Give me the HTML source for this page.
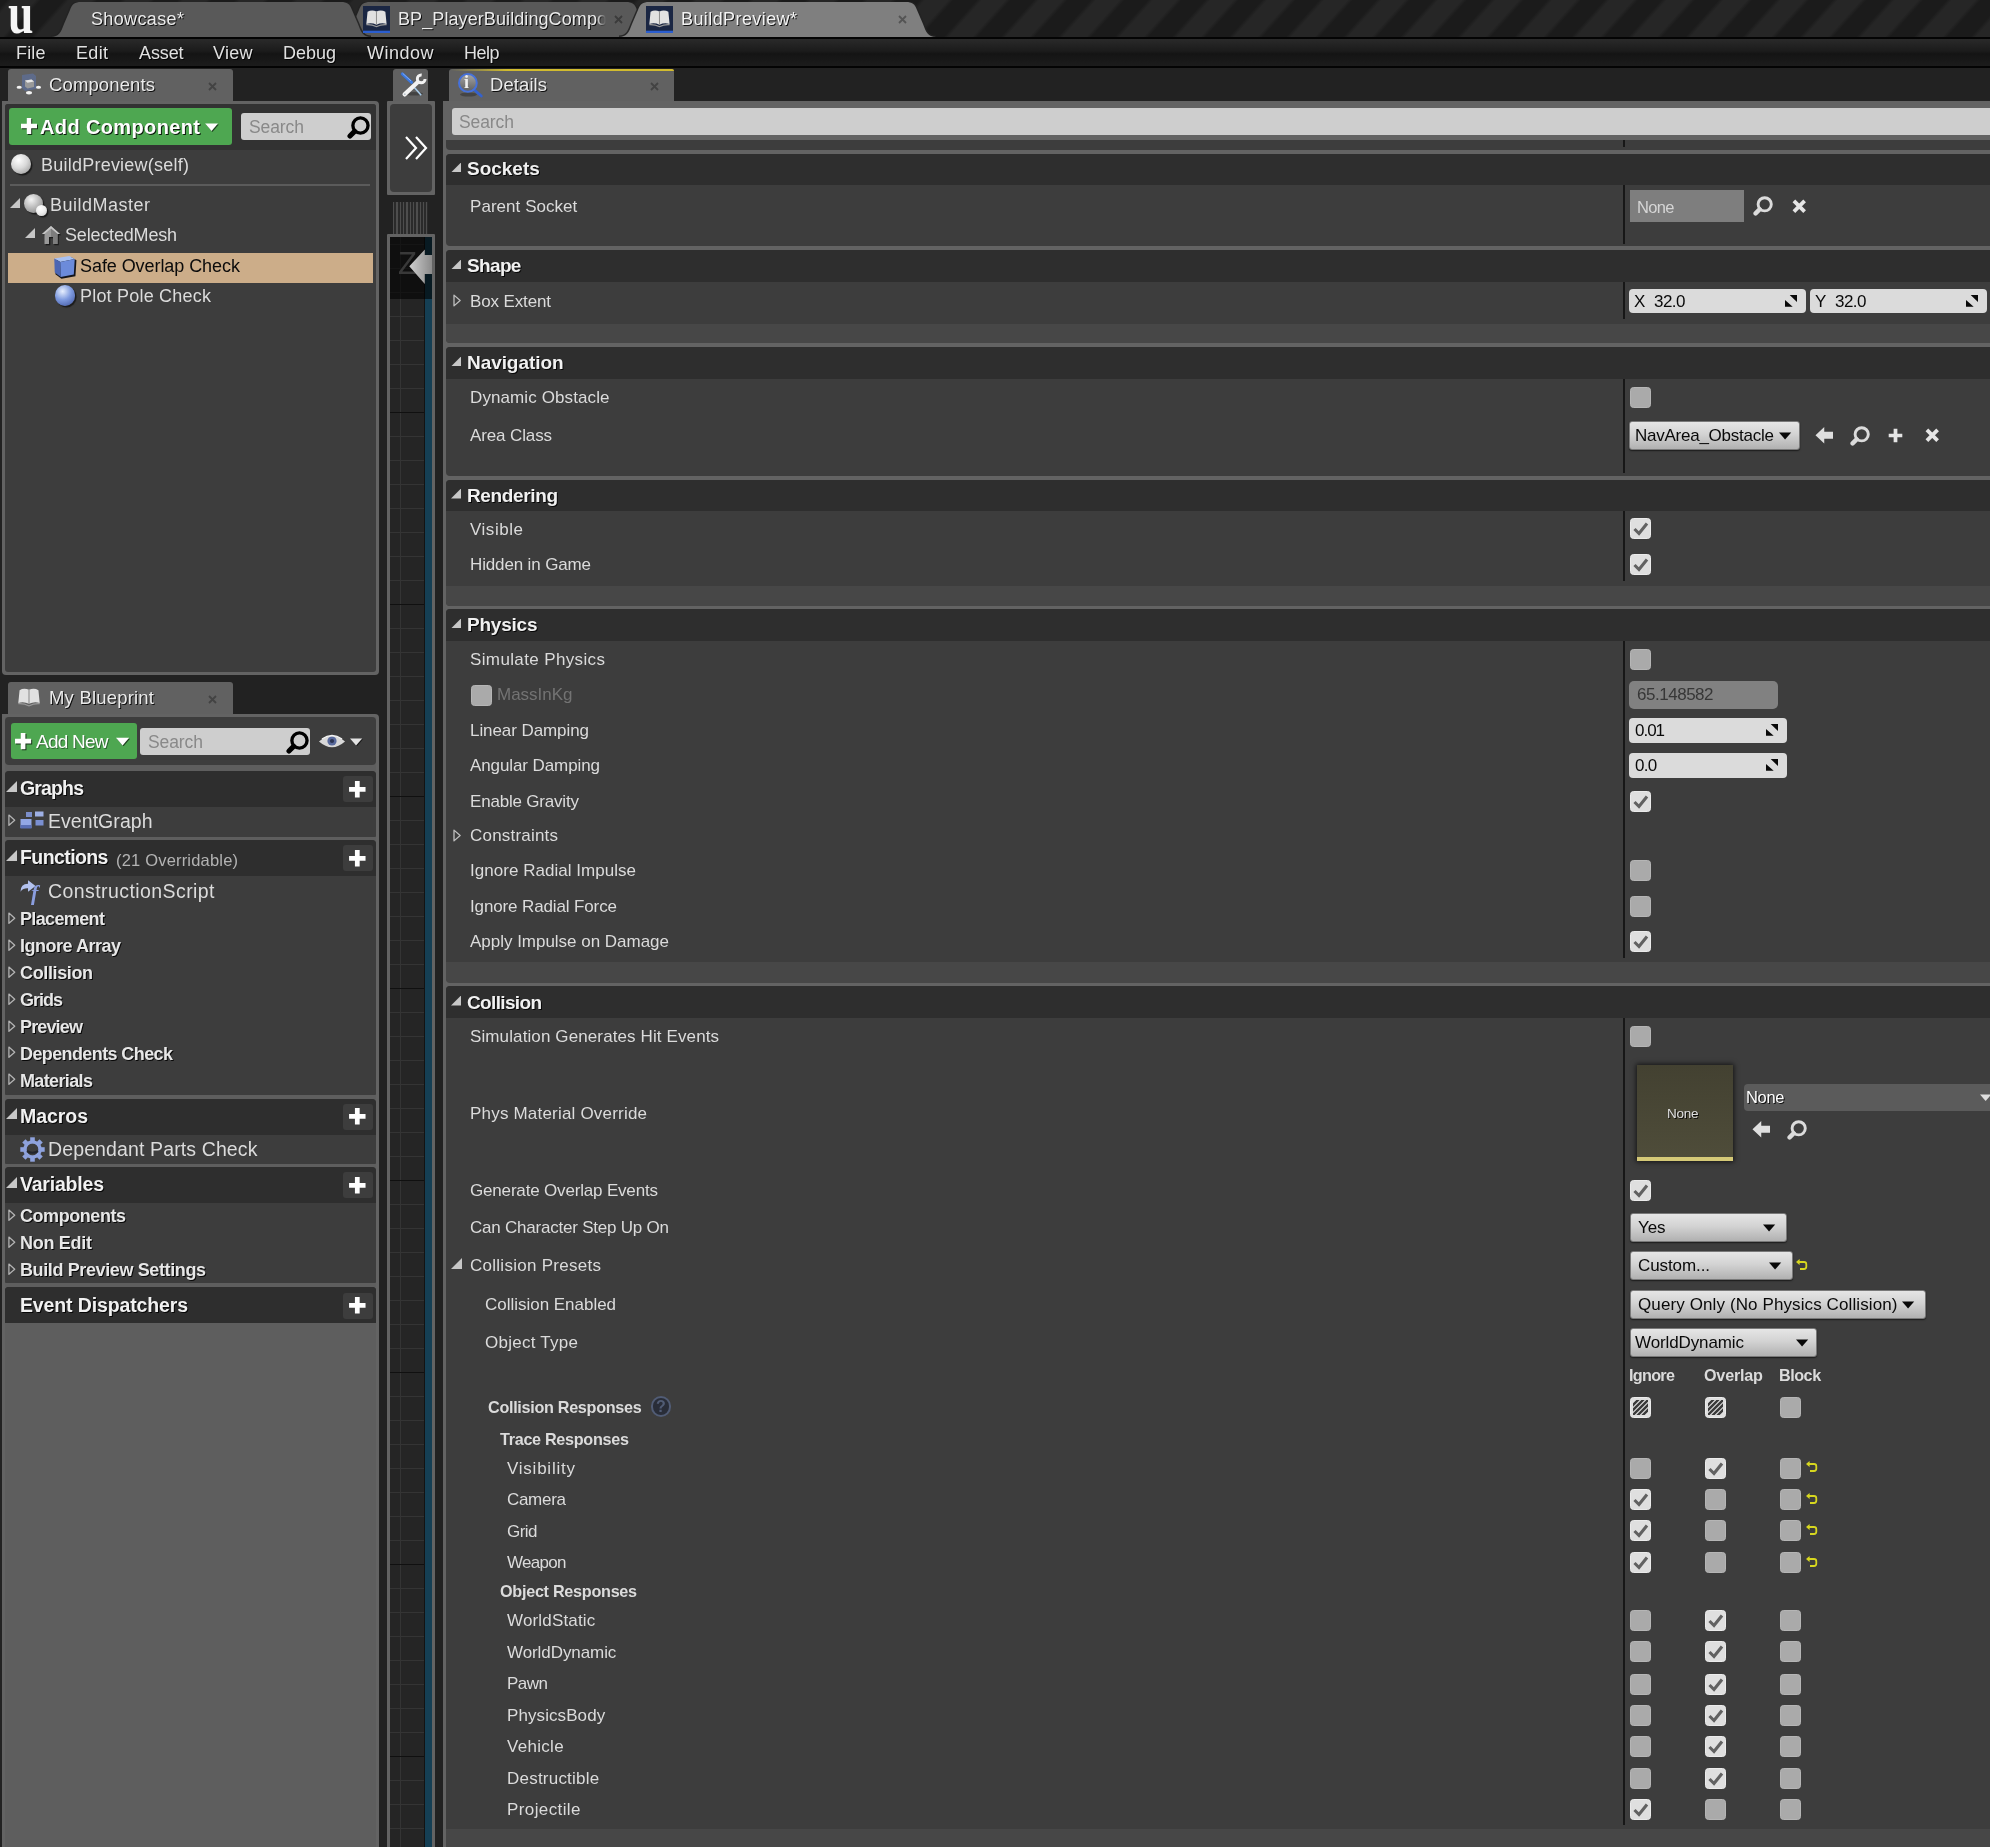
<!DOCTYPE html>
<html><head><meta charset="utf-8"><title>BuildPreview</title>
<style>
html,body{margin:0;padding:0;}
body{width:1990px;height:1847px;overflow:hidden;background:#222;position:relative;font-family:"Liberation Sans",sans-serif;}
body div,body svg{position:absolute;box-sizing:border-box;}
.t{white-space:nowrap;will-change:transform;}
</style></head><body><div id="root" style="left:0;top:0;width:1990px;height:1847px;opacity:.999;overflow:hidden">
<div style="left:-76px;top:0px;width:2100px;height:37px;background:#1e1e1e;background:repeating-linear-gradient(132deg,#1c1c1c 2px,#1c1c1c 19.2px,#272727 23.2px,#272727 40.4px,#1c1c1c 44.4px);"></div>
<svg style="left:338px;top:2px;" width="320" height="35" viewBox="-2 0 320 35"><path d="M0 35 C8 35 10 30 13 22 L19 8 C21 2 24 0 30 0 L286 0 C292 0 295 2 297 8 L303 22 C306 30 308 35 316 35 Z" fill="#262626" stroke="#242424" stroke-width="3" opacity=".9"/><path d="M0 35 C8 35 10 30 13 22 L19 8 C21 2 24 0 30 0 L286 0 C292 0 295 2 297 8 L303 22 C306 30 308 35 316 35 Z" fill="#5a5a5a"/></svg>
<svg style="left:49px;top:2px;" width="324" height="35" viewBox="-2 0 324 35"><path d="M0 35 C8 35 10 30 13 22 L19 8 C21 2 24 0 30 0 L290 0 C296 0 299 2 301 8 L307 22 C310 30 312 35 320 35 Z" fill="#262626" stroke="#242424" stroke-width="3" opacity=".9"/><path d="M0 35 C8 35 10 30 13 22 L19 8 C21 2 24 0 30 0 L290 0 C296 0 299 2 301 8 L307 22 C310 30 312 35 320 35 Z" fill="#5a5a5a"/></svg>
<svg style="left:617px;top:2px;" width="321" height="35" viewBox="-2 0 321 35"><path d="M0 35 C8 35 10 30 13 22 L19 8 C21 2 24 0 30 0 L287 0 C293 0 296 2 298 8 L304 22 C307 30 309 35 317 35 Z" fill="#262626" stroke="#242424" stroke-width="3" opacity=".9"/><path d="M0 35 C8 35 10 30 13 22 L19 8 C21 2 24 0 30 0 L287 0 C293 0 296 2 298 8 L304 22 C307 30 309 35 317 35 Z" fill="#808080"/></svg>
<div class="t" style="left:7.5px;top:-20.5px;font-family:'Liberation Serif',serif;font-weight:bold;font-size:60px;line-height:66px;color:#f6f6f6;transform:scaleX(.76);transform-origin:0 0;">u</div>
<div class="t" style="left:90.6px;top:7.9px;font-size:18px;line-height:23px;color:#ececec;letter-spacing:0.364px;text-shadow:1px 1px 0 rgba(0,0,0,.85);">Showcase*</div>
<svg style="left:363px;top:5.5px;" width="27" height="27" viewBox="0 0 28 28"><rect x="0" y="0" width="28" height="28" fill="#1b2744"/><rect x="0" y="25.6" width="28" height="2.4" fill="#2c5fd0"/><g transform="translate(2.2,1) scale(.84)"><path d="M3 6 Q8 3 14 5.5 Q20 3 25 6 L26.5 21 Q20 19 14 22 Q8 19 1.5 21 Z" fill="#e2e2e2"/><path d="M14 5.5 V22" stroke="#8a8a8a" stroke-width="1.2"/><path d="M1.5 21 Q8 20.5 14 23.5 Q20 20.5 26.5 21 L26.5 22.5 Q20 22 14 25 Q8 22 1.5 22.5Z" fill="#9a9a9a"/></g></svg>
<div class="t" style="left:398.4px;top:7.9px;font-size:18px;line-height:23px;color:#ececec;letter-spacing:0.090px;text-shadow:1px 1px 0 rgba(0,0,0,.85);width:207.5px;overflow:hidden;-webkit-mask-image:linear-gradient(90deg,#000 95%,transparent 100%);mask-image:linear-gradient(90deg,#000 95%,transparent 100%);">BP_PlayerBuildingCompo</div>
<svg style="left:613.5px;top:15px;" width="9" height="9" viewBox="0 0 9 9"><path d="M1 1 L8 8 M8 1 L1 8" stroke="#3c3c3c" stroke-width="1.8"/></svg>
<svg style="left:646px;top:5.5px;" width="27" height="27" viewBox="0 0 28 28"><rect x="0" y="0" width="28" height="28" fill="#1b2744"/><rect x="0" y="25.6" width="28" height="2.4" fill="#2c5fd0"/><g transform="translate(2.2,1) scale(.84)"><path d="M3 6 Q8 3 14 5.5 Q20 3 25 6 L26.5 21 Q20 19 14 22 Q8 19 1.5 21 Z" fill="#e2e2e2"/><path d="M14 5.5 V22" stroke="#8a8a8a" stroke-width="1.2"/><path d="M1.5 21 Q8 20.5 14 23.5 Q20 20.5 26.5 21 L26.5 22.5 Q20 22 14 25 Q8 22 1.5 22.5Z" fill="#9a9a9a"/></g></svg>
<div class="t" style="left:681.4px;top:7.9px;font-size:18px;line-height:23px;color:#f4f4f4;letter-spacing:0.412px;text-shadow:1px 1px 0 rgba(0,0,0,.85);">BuildPreview*</div>
<svg style="left:898px;top:15px;" width="9" height="9" viewBox="0 0 9 9"><path d="M1 1 L8 8 M8 1 L1 8" stroke="#555" stroke-width="1.8"/></svg>
<div style="left:0px;top:37px;width:1990px;height:2px;background:#050505;"></div>
<div style="left:0px;top:39px;width:1990px;height:27px;background:#1b1b1b;background:linear-gradient(#2b2b2b,#1c1c1c 45%,#151515 55%,#1d1d1d);"></div>
<div style="left:0px;top:65.5px;width:1990px;height:2px;background:#050505;"></div>
<div class="t" style="left:15.7px;top:41.7px;font-size:18px;line-height:23px;color:#e2e2e2;letter-spacing:0.173px;text-shadow:1px 1px 0 rgba(0,0,0,.85);">File</div>
<div class="t" style="left:75.7px;top:41.7px;font-size:18px;line-height:23px;color:#e2e2e2;letter-spacing:0.317px;text-shadow:1px 1px 0 rgba(0,0,0,.85);">Edit</div>
<div class="t" style="left:138.7px;top:41.7px;font-size:18px;line-height:23px;color:#e2e2e2;letter-spacing:-0.125px;text-shadow:1px 1px 0 rgba(0,0,0,.85);">Asset</div>
<div class="t" style="left:213.2px;top:41.7px;font-size:18px;line-height:23px;color:#e2e2e2;letter-spacing:0.267px;text-shadow:1px 1px 0 rgba(0,0,0,.85);">View</div>
<div class="t" style="left:283.2px;top:41.7px;font-size:18px;line-height:23px;color:#e2e2e2;letter-spacing:-0.002px;text-shadow:1px 1px 0 rgba(0,0,0,.85);">Debug</div>
<div class="t" style="left:367.2px;top:41.7px;font-size:18px;line-height:23px;color:#e2e2e2;letter-spacing:0.484px;text-shadow:1px 1px 0 rgba(0,0,0,.85);">Window</div>
<div class="t" style="left:464.2px;top:41.7px;font-size:18px;line-height:23px;color:#e2e2e2;letter-spacing:-0.497px;text-shadow:1px 1px 0 rgba(0,0,0,.85);">Help</div>
<div style="left:8px;top:69px;width:225px;height:33px;background:#626262;border-radius:3px 3px 0 0;"></div>
<div style="left:2px;top:101px;width:377px;height:574px;background:#646464;border-radius:0 4px 4px 4px;"></div>
<div style="left:5px;top:104px;width:371px;height:567.6px;background:#3e3e3e;border-radius:3px;"></div>
<div style="left:5px;top:104px;width:371px;height:46px;background:#333333;border-radius:3px 3px 0 0;"></div>
<div class="t" style="left:49.4px;top:72.5px;font-size:18.5px;line-height:24px;color:#ececec;letter-spacing:0.123px;text-shadow:1px 1px 0 rgba(0,0,0,.85);">Components</div>
<svg style="left:208px;top:81.5px;" width="9" height="9" viewBox="0 0 9 9"><path d="M1 1 L8 8 M8 1 L1 8" stroke="#444" stroke-width="1.8"/></svg>
<svg style="left:16px;top:72px;" width="26" height="24" viewBox="0 0 26 24"><path d="M6 3 L17 1.5 L20 4 L20 17 L9 19 L6 16 Z" fill="#5f7099" opacity=".75"/><path d="M9 8.5 L15.5 7.5 L18 9.5 L18 15 L11.5 16.5 L9 14.5 Z" fill="#9a9a9a"/><path d="M9 8.5 L15.5 7.5 L18 9.5 L11.5 10.8 Z" fill="#e9e9e9"/><ellipse cx="3.2" cy="15.3" rx="2.6" ry="1.5" fill="#f4f4f4"/><ellipse cx="22.5" cy="15.3" rx="2.6" ry="1.5" fill="#f4f4f4"/><ellipse cx="13" cy="20.8" rx="3" ry="1.7" fill="#f4f4f4"/></svg>
<div style="left:9px;top:108px;width:223px;height:37px;background:#4fa852;border-radius:3px;"></div>
<svg style="left:19px;top:115.5px;" width="20" height="20" viewBox="0 0 20 20"><path d="M10 2 V18 M2 10 H18" stroke="rgba(0,0,0,.7)" stroke-width="4.4" transform="translate(1,1)"/><path d="M10 2 V18 M2 10 H18" stroke="#fff" stroke-width="4.4"/></svg>
<div class="t" style="left:40.4px;top:114.2px;font-size:20px;line-height:26px;color:#fff;letter-spacing:0.375px;font-weight:bold;text-shadow:1px 1px 0 rgba(0,0,0,.85);">Add Component</div>
<svg style="left:205px;top:123px;" width="14" height="9" viewBox="0 0 12.8 8.4"><path d="M0 0.5 L12 0.5 L6 7.5 Z" fill="rgba(0,0,0,.6)" transform="translate(0.8,0.8)"/><path d="M0 0.5 L12 0.5 L6 7.5 Z" fill="#fff"/></svg>
<div style="left:241px;top:113px;width:130px;height:27px;background:#cfcfcf;border-radius:3px;"></div>
<div class="t" style="left:248.9px;top:115.7px;font-size:17.5px;line-height:23px;color:#8a8a8a;letter-spacing:-0.095px;">Search</div>
<svg style="left:347px;top:116px;" width="23" height="23" viewBox="0 0 20 20"><circle cx="11.7" cy="8.3" r="6.6" fill="none" stroke="#000" stroke-width="2.9"/><path d="M6.6 13.4 L2.6 17.4" stroke="#000" stroke-width="4.4" stroke-linecap="round"/></svg>
<div class="t" style="left:41.3px;top:153.7px;font-size:18px;line-height:23px;color:#dcdcdc;letter-spacing:0.230px;">BuildPreview(self)</div>
<div style="left:10px;top:184px;width:360px;height:2px;background:#5c5c5c;"></div>
<div class="t" style="left:50.3px;top:194.2px;font-size:18px;line-height:23px;color:#dcdcdc;letter-spacing:0.496px;">BuildMaster</div>
<div class="t" style="left:65.3px;top:224.2px;font-size:18px;line-height:23px;color:#dcdcdc;letter-spacing:-0.185px;">SelectedMesh</div>
<div style="left:8px;top:253px;width:365px;height:30px;background:#cdae8a;"></div>
<div class="t" style="left:80.3px;top:254.7px;font-size:18px;line-height:23px;color:#0c0c0c;letter-spacing:-0.070px;">Safe Overlap Check</div>
<div class="t" style="left:80.3px;top:284.7px;font-size:18px;line-height:23px;color:#dcdcdc;letter-spacing:0.203px;">Plot Pole Check</div>
<svg style="left:10px;top:198px;" width="10" height="10" viewBox="0 0 10 10"><path d="M10 0 L10 10 L0 10 Z" fill="#c8c8c8"/></svg>
<svg style="left:25px;top:228px;" width="10" height="10" viewBox="0 0 10 10"><path d="M10 0 L10 10 L0 10 Z" fill="#c8c8c8"/></svg>
<div style="left:10.5px;top:154px;width:20px;height:20px;background:#dadada;border-radius:50%;background:radial-gradient(circle at 38% 30%,#ffffff 0,#dadada 45%,#8e8e8e 100%);box-shadow:1.5px 1.5px 1px rgba(0,0,0,.55);"></div>
<div style="left:24px;top:194px;width:19px;height:19px;background:#bdbdbd;border-radius:50%;background:radial-gradient(circle at 38% 30%,#f4f4f4 0,#bdbdbd 45%,#7d7d7d 100%);box-shadow:1.5px 1.5px 1px rgba(0,0,0,.55);"></div>
<div style="left:36px;top:205px;width:11px;height:11px;background:#f0f0f0;border-radius:50%;background:radial-gradient(circle at 38% 30%,#ffffff 0,#f0f0f0 45%,#c8c8c8 100%);box-shadow:1.5px 1.5px 1px rgba(0,0,0,.55);"></div>
<div style="left:54.5px;top:285px;width:20.5px;height:20.5px;background:#7f9be0;border-radius:50%;background:radial-gradient(circle at 38% 30%,#e8f0ff 0,#7f9be0 45%,#3a4f9a 100%);box-shadow:1.5px 1.5px 1px rgba(0,0,0,.55);"></div>
<svg style="left:40px;top:224px;" width="22" height="22" viewBox="0 0 22 22"><path d="M11 2 L20 10 L17.5 10 L17.5 20 L13 20 L13 13 L9 13 L9 20 L4.5 20 L4.5 10 L2 10 Z" fill="#1c1c1c" transform="translate(1.3,1.3)"/><path d="M11 2 L20 10 L17.5 10 L17.5 20 L13 20 L13 13 L9 13 L9 20 L4.5 20 L4.5 10 L2 10 Z" fill="#9a9a9a"/><path d="M11 2 L20 10 L17.5 10 L11 4.5 L4.5 10 L2 10 Z" fill="#c6c6c6"/><path d="M11 4.5 L17.5 10 L17.5 20 L13 20 L13 13 L11 13 Z" fill="#7e7e7e"/></svg>
<svg style="left:51.5px;top:253.5px;" width="25.5" height="25" viewBox="0 0 25 25"><path d="M3 4 L18 2 L23 5 L22 21 L8 23.5 L2 19 Z" fill="#15161c" transform="translate(1.2,1.2)"/><path d="M2 4.5 L17 2 L22.5 5 L8 8 Z" fill="#a9c1f2"/><path d="M2 4.5 L8 8 L8.5 23 L2.5 18.5 Z" fill="#4c66b4"/><path d="M8 8 L22.5 5 L21.5 20.5 L8.5 23 Z" fill="#6d8cdb"/></svg>
<div style="left:8px;top:682px;width:225px;height:33px;background:#626262;border-radius:3px 3px 0 0;"></div>
<div style="left:2px;top:714px;width:377px;height:1140px;background:#646464;border-radius:0 4px 0 0;"></div>
<div style="left:5px;top:717px;width:371px;height:1140px;background:#5f5f5f;"></div>
<div class="t" style="left:49.4px;top:685.5px;font-size:18.5px;line-height:24px;color:#ececec;letter-spacing:0.195px;text-shadow:1px 1px 0 rgba(0,0,0,.85);">My Blueprint</div>
<svg style="left:208px;top:694.5px;" width="9" height="9" viewBox="0 0 9 9"><path d="M1 1 L8 8 M8 1 L1 8" stroke="#444" stroke-width="1.8"/></svg>
<svg style="left:17px;top:685px;" width="24" height="24" viewBox="0 0 28 28"><path d="M3 6 Q8 3 14 5.5 Q20 3 25 6 L26.5 21 Q20 19 14 22 Q8 19 1.5 21 Z" fill="#e2e2e2"/><path d="M14 5.5 V22" stroke="#8a8a8a" stroke-width="1.2"/><path d="M1.5 21 Q8 20.5 14 23.5 Q20 20.5 26.5 21 L26.5 22.5 Q20 22 14 25 Q8 22 1.5 22.5Z" fill="#9a9a9a"/></svg>
<div style="left:5px;top:717px;width:371px;height:48px;background:#3e3e3e;border-radius:4px;"></div>
<div style="left:11px;top:723px;width:126px;height:35.5px;background:#4fa852;border-radius:3px;"></div>
<svg style="left:13.3px;top:730.5px;" width="20.2" height="20.2" viewBox="0 0 20 20"><path d="M10 2 V18 M2 10 H18" stroke="rgba(0,0,0,.7)" stroke-width="4.6" transform="translate(1,1)"/><path d="M10 2 V18 M2 10 H18" stroke="#fff" stroke-width="4.6"/></svg>
<div class="t" style="left:35.9px;top:729.2px;font-size:19px;line-height:25px;color:#fff;letter-spacing:-0.773px;text-shadow:1px 1px 0 rgba(0,0,0,.4);">Add New</div>
<svg style="left:115.6px;top:736.5px;" width="14" height="9.8" viewBox="0 0 12.8 8.4"><path d="M0 0.5 L12 0.5 L6 7.5 Z" fill="rgba(0,0,0,.6)" transform="translate(0.8,0.8)"/><path d="M0 0.5 L12 0.5 L6 7.5 Z" fill="#fff"/></svg>
<div style="left:140px;top:728px;width:170px;height:27px;background:#cfcfcf;border-radius:3px;"></div>
<div class="t" style="left:147.9px;top:730.7px;font-size:17.5px;line-height:23px;color:#8a8a8a;letter-spacing:-0.095px;">Search</div>
<svg style="left:286px;top:730.5px;" width="23" height="23" viewBox="0 0 20 20"><circle cx="11.7" cy="8.3" r="6.6" fill="none" stroke="#000" stroke-width="2.9"/><path d="M6.6 13.4 L2.6 17.4" stroke="#000" stroke-width="4.4" stroke-linecap="round"/></svg>
<svg style="left:318px;top:733px;" width="28" height="17" viewBox="0 0 28 17"><path d="M1 8.5 Q14 -3 27 8.5 Q14 20 1 8.5 Z" fill="#d9d9d9"/><circle cx="14" cy="8" r="4.6" fill="#5a6b9e"/><circle cx="14" cy="8" r="2.1" fill="#2c3554"/><path d="M4 6 Q14 -1 24 6" stroke="#f4f4f4" stroke-width="1.5" fill="none"/></svg>
<svg style="left:349.5px;top:737.5px;" width="13" height="8.5" viewBox="0 0 12.8 8.4"><path d="M0 0.5 L12 0.5 L6 7.5 Z" fill="rgba(0,0,0,.6)" transform="translate(0.8,0.8)"/><path d="M0 0.5 L12 0.5 L6 7.5 Z" fill="#e4e4e4"/></svg>
<div style="left:5px;top:771px;width:371px;height:65.5px;background:#3e3e3e;border-radius:4px 4px 1px 1px;"></div>
<div style="left:5px;top:771px;width:371px;height:36px;background:#2f2f2f;border-radius:4px 4px 0 0;"></div>
<svg style="left:6px;top:781.0999999999999px;" width="11" height="11" viewBox="0 0 10 10"><path d="M10 0 L10 10 L0 10 Z" fill="#c8c8c8"/></svg>
<div class="t" style="left:19.9px;top:776.3px;font-size:19.5px;line-height:25px;color:#f2f2f2;letter-spacing:-0.850px;font-weight:bold;text-shadow:1px 1px 0 rgba(0,0,0,.85);">Graphs</div>
<div style="left:343px;top:776.3px;width:30px;height:26px;background:#3e3e3e;border-radius:3px;"></div>
<svg style="left:347px;top:778.8px;" width="20.6" height="20.6" viewBox="0 0 20 20"><path d="M10 2 V18 M2 10 H18" stroke="#fff" stroke-width="4.6"/></svg>
<svg style="left:7.6px;top:814.4px;" width="8" height="12.4" viewBox="0 0 9 14"><path d="M1 1.2 L7.6 7 L1 12.8 Z" fill="none" stroke="#b4b4b4" stroke-width="1.4" stroke-linejoin="round"/></svg>
<div class="t" style="left:48.1px;top:809.4px;font-size:19.5px;line-height:25px;color:#dcdcdc;letter-spacing:0.052px;">EventGraph</div>
<svg style="left:20px;top:811px;" width="25" height="20" viewBox="0 0 25 20"><rect x="6" y="1" width="6" height="5" fill="#7c8fcb"/><rect x="15" y="0.5" width="8.5" height="5" fill="#9fb1e6"/><rect x="0.5" y="8" width="11" height="9" fill="#93a8e6"/><rect x="0.5" y="14" width="11" height="3.5" fill="#5b70b6"/><rect x="15.5" y="9" width="8" height="5.5" fill="#7b90d2"/></svg>
<div style="left:5px;top:840.3px;width:371px;height:254.5px;background:#3e3e3e;border-radius:4px 4px 1px 1px;"></div>
<div style="left:5px;top:840.3px;width:371px;height:36px;background:#2f2f2f;border-radius:4px 4px 0 0;"></div>
<svg style="left:6px;top:850.1999999999999px;" width="11" height="11" viewBox="0 0 10 10"><path d="M10 0 L10 10 L0 10 Z" fill="#c8c8c8"/></svg>
<div class="t" style="left:19.9px;top:845.4px;font-size:19.5px;line-height:25px;color:#f2f2f2;letter-spacing:-0.589px;font-weight:bold;text-shadow:1px 1px 0 rgba(0,0,0,.85);">Functions</div>
<div style="left:343px;top:845.4px;width:30px;height:26px;background:#3e3e3e;border-radius:3px;"></div>
<svg style="left:347px;top:847.9px;" width="20.6" height="20.6" viewBox="0 0 20 20"><path d="M10 2 V18 M2 10 H18" stroke="#fff" stroke-width="4.6"/></svg>
<div class="t" style="left:115.9px;top:849.7px;font-size:16.5px;line-height:21px;color:#b4b4b4;letter-spacing:0.186px;">(21 Overridable)</div>
<div class="t" style="left:48.1px;top:878.5px;font-size:19.5px;line-height:25px;color:#dcdcdc;letter-spacing:0.423px;">ConstructionScript</div>
<svg style="left:19.5px;top:879.3px;" width="17" height="14" viewBox="0 0 18 14"><path d="M0.5 13 Q0.5 4.5 8.5 4.5 L8.5 0.8 L16.5 7 L8.5 13 L8.5 9.5 Q3.5 9.2 0.5 13 Z" fill="#b4c3f0"/></svg>
<div class="t" style="left:31px;top:879.5px;font-family:'Liberation Serif',serif;font-style:italic;font-weight:bold;font-size:22px;line-height:26px;color:#8c9fe0;">f</div>
<svg style="left:7.6px;top:911.9000000000001px;" width="8" height="12.4" viewBox="0 0 9 14"><path d="M1 1.2 L7.6 7 L1 12.8 Z" fill="none" stroke="#b4b4b4" stroke-width="1.4" stroke-linejoin="round"/></svg>
<div class="t" style="left:20.2px;top:908.4px;font-size:18px;line-height:23px;color:#e8e8e8;letter-spacing:-0.636px;font-weight:bold;text-shadow:1px 1px 0 rgba(0,0,0,.85);">Placement</div>
<svg style="left:7.6px;top:938.8000000000001px;" width="8" height="12.4" viewBox="0 0 9 14"><path d="M1 1.2 L7.6 7 L1 12.8 Z" fill="none" stroke="#b4b4b4" stroke-width="1.4" stroke-linejoin="round"/></svg>
<div class="t" style="left:20.2px;top:935.3px;font-size:18px;line-height:23px;color:#e8e8e8;letter-spacing:-0.489px;font-weight:bold;text-shadow:1px 1px 0 rgba(0,0,0,.85);">Ignore Array</div>
<svg style="left:7.6px;top:965.7px;" width="8" height="12.4" viewBox="0 0 9 14"><path d="M1 1.2 L7.6 7 L1 12.8 Z" fill="none" stroke="#b4b4b4" stroke-width="1.4" stroke-linejoin="round"/></svg>
<div class="t" style="left:20.2px;top:962.2px;font-size:18px;line-height:23px;color:#e8e8e8;letter-spacing:-0.370px;font-weight:bold;text-shadow:1px 1px 0 rgba(0,0,0,.85);">Collision</div>
<svg style="left:7.6px;top:992.8000000000001px;" width="8" height="12.4" viewBox="0 0 9 14"><path d="M1 1.2 L7.6 7 L1 12.8 Z" fill="none" stroke="#b4b4b4" stroke-width="1.4" stroke-linejoin="round"/></svg>
<div class="t" style="left:20.2px;top:989.3px;font-size:18px;line-height:23px;color:#e8e8e8;letter-spacing:-0.995px;font-weight:bold;text-shadow:1px 1px 0 rgba(0,0,0,.85);">Grids</div>
<svg style="left:7.6px;top:1019.7px;" width="8" height="12.4" viewBox="0 0 9 14"><path d="M1 1.2 L7.6 7 L1 12.8 Z" fill="none" stroke="#b4b4b4" stroke-width="1.4" stroke-linejoin="round"/></svg>
<div class="t" style="left:20.2px;top:1016.2px;font-size:18px;line-height:23px;color:#e8e8e8;letter-spacing:-0.855px;font-weight:bold;text-shadow:1px 1px 0 rgba(0,0,0,.85);">Preview</div>
<svg style="left:7.6px;top:1046.2px;" width="8" height="12.4" viewBox="0 0 9 14"><path d="M1 1.2 L7.6 7 L1 12.8 Z" fill="none" stroke="#b4b4b4" stroke-width="1.4" stroke-linejoin="round"/></svg>
<div class="t" style="left:20.2px;top:1042.7px;font-size:18px;line-height:23px;color:#e8e8e8;letter-spacing:-0.606px;font-weight:bold;text-shadow:1px 1px 0 rgba(0,0,0,.85);">Dependents Check</div>
<svg style="left:7.6px;top:1073.2px;" width="8" height="12.4" viewBox="0 0 9 14"><path d="M1 1.2 L7.6 7 L1 12.8 Z" fill="none" stroke="#b4b4b4" stroke-width="1.4" stroke-linejoin="round"/></svg>
<div class="t" style="left:20.2px;top:1069.7px;font-size:18px;line-height:23px;color:#e8e8e8;letter-spacing:-0.629px;font-weight:bold;text-shadow:1px 1px 0 rgba(0,0,0,.85);">Materials</div>
<div style="left:5px;top:1098.6px;width:371px;height:65.0px;background:#3e3e3e;border-radius:4px 4px 1px 1px;"></div>
<div style="left:5px;top:1098.6px;width:371px;height:36px;background:#2f2f2f;border-radius:4px 4px 0 0;"></div>
<svg style="left:6px;top:1108.3999999999999px;" width="11" height="11" viewBox="0 0 10 10"><path d="M10 0 L10 10 L0 10 Z" fill="#c8c8c8"/></svg>
<div class="t" style="left:19.9px;top:1103.6px;font-size:19.5px;line-height:25px;color:#f2f2f2;letter-spacing:-0.050px;font-weight:bold;text-shadow:1px 1px 0 rgba(0,0,0,.85);">Macros</div>
<div style="left:343px;top:1103.6px;width:30px;height:26px;background:#3e3e3e;border-radius:3px;"></div>
<svg style="left:347px;top:1106.1px;" width="20.6" height="20.6" viewBox="0 0 20 20"><path d="M10 2 V18 M2 10 H18" stroke="#fff" stroke-width="4.6"/></svg>
<div class="t" style="left:48.1px;top:1136.8px;font-size:19.5px;line-height:25px;color:#dcdcdc;letter-spacing:0.121px;">Dependant Parts Check</div>
<svg style="left:19.5px;top:1136.5px;" width="25" height="25" viewBox="0 0 25 25"><g transform="translate(12.5,12.5)"><rect x="-2.3" y="-12.2" width="4.6" height="6" fill="#8fa3de" transform="rotate(0)"/><rect x="-2.3" y="-12.2" width="4.6" height="6" fill="#8fa3de" transform="rotate(45)"/><rect x="-2.3" y="-12.2" width="4.6" height="6" fill="#8fa3de" transform="rotate(90)"/><rect x="-2.3" y="-12.2" width="4.6" height="6" fill="#8fa3de" transform="rotate(135)"/><rect x="-2.3" y="-12.2" width="4.6" height="6" fill="#8fa3de" transform="rotate(180)"/><rect x="-2.3" y="-12.2" width="4.6" height="6" fill="#8fa3de" transform="rotate(225)"/><rect x="-2.3" y="-12.2" width="4.6" height="6" fill="#8fa3de" transform="rotate(270)"/><rect x="-2.3" y="-12.2" width="4.6" height="6" fill="#8fa3de" transform="rotate(315)"/><circle r="7.6" fill="none" stroke="#8fa3de" stroke-width="3.4"/><path d="M-5.5 1.5 Q0 5 5.5 1.5" stroke="#23262e" stroke-width="2.2" fill="none"/></g></svg>
<div style="left:5px;top:1167.4px;width:371px;height:116.09999999999991px;background:#3e3e3e;border-radius:4px 4px 1px 1px;"></div>
<div style="left:5px;top:1167.4px;width:371px;height:36px;background:#2f2f2f;border-radius:4px 4px 0 0;"></div>
<svg style="left:6px;top:1177.2px;" width="11" height="11" viewBox="0 0 10 10"><path d="M10 0 L10 10 L0 10 Z" fill="#c8c8c8"/></svg>
<div class="t" style="left:19.9px;top:1172.4px;font-size:19.5px;line-height:25px;color:#f2f2f2;letter-spacing:-0.201px;font-weight:bold;text-shadow:1px 1px 0 rgba(0,0,0,.85);">Variables</div>
<div style="left:343px;top:1172.4px;width:30px;height:26px;background:#3e3e3e;border-radius:3px;"></div>
<svg style="left:347px;top:1174.9px;" width="20.6" height="20.6" viewBox="0 0 20 20"><path d="M10 2 V18 M2 10 H18" stroke="#fff" stroke-width="4.6"/></svg>
<svg style="left:7.6px;top:1208.6000000000001px;" width="8" height="12.4" viewBox="0 0 9 14"><path d="M1 1.2 L7.6 7 L1 12.8 Z" fill="none" stroke="#b4b4b4" stroke-width="1.4" stroke-linejoin="round"/></svg>
<div class="t" style="left:20.2px;top:1205.1px;font-size:18px;line-height:23px;color:#e8e8e8;letter-spacing:-0.442px;font-weight:bold;text-shadow:1px 1px 0 rgba(0,0,0,.85);">Components</div>
<svg style="left:7.6px;top:1235.5px;" width="8" height="12.4" viewBox="0 0 9 14"><path d="M1 1.2 L7.6 7 L1 12.8 Z" fill="none" stroke="#b4b4b4" stroke-width="1.4" stroke-linejoin="round"/></svg>
<div class="t" style="left:20.2px;top:1232.0px;font-size:18px;line-height:23px;color:#e8e8e8;letter-spacing:-0.283px;font-weight:bold;text-shadow:1px 1px 0 rgba(0,0,0,.85);">Non Edit</div>
<svg style="left:7.6px;top:1262.6000000000001px;" width="8" height="12.4" viewBox="0 0 9 14"><path d="M1 1.2 L7.6 7 L1 12.8 Z" fill="none" stroke="#b4b4b4" stroke-width="1.4" stroke-linejoin="round"/></svg>
<div class="t" style="left:20.2px;top:1259.1px;font-size:18px;line-height:23px;color:#e8e8e8;letter-spacing:-0.383px;font-weight:bold;text-shadow:1px 1px 0 rgba(0,0,0,.85);">Build Preview Settings</div>
<div style="left:5px;top:1287.2px;width:371px;height:35.399999999999864px;background:#3e3e3e;border-radius:4px 4px 1px 1px;"></div>
<div style="left:5px;top:1287.2px;width:371px;height:36px;background:#2f2f2f;border-radius:4px 4px 0 0;"></div>
<div style="left:5px;top:1287.2px;width:371px;height:35.4px;background:#2f2f2f;border-radius:4px;"></div>
<div class="t" style="left:19.9px;top:1292.5px;font-size:19.5px;line-height:25px;color:#f2f2f2;letter-spacing:-0.134px;font-weight:bold;text-shadow:1px 1px 0 rgba(0,0,0,.85);">Event Dispatchers</div>
<div style="left:343px;top:1292.5px;width:30px;height:26px;background:#3e3e3e;border-radius:3px;"></div>
<svg style="left:347px;top:1295.0px;" width="20.6" height="20.6" viewBox="0 0 20 20"><path d="M10 2 V18 M2 10 H18" stroke="#fff" stroke-width="4.6"/></svg>
<div style="left:393px;top:68.7px;width:35px;height:33px;background:#626262;border-radius:3px 3px 0 0;"></div>
<svg style="left:400px;top:71px;" width="28" height="28" viewBox="0 0 28 28"><ellipse cx="14" cy="22.8" rx="9" ry="1.8" fill="#222" opacity=".45"/><path d="M2.3 2.9 L11.6 11.3" stroke="#3b78e0" stroke-width="3" stroke-linecap="round"/><path d="M2.6 2.3 L11 9.9" stroke="#8db4f5" stroke-width="0.9"/><path d="M14.4 16.4 L21.2 24.3" stroke="#a9cdec" stroke-width="1.5"/><circle cx="21.2" cy="7.9" r="3.9" fill="none" stroke="#f4f4f4" stroke-width="2.9" stroke-dasharray="18.4 6.1"/><path d="M17.6 11.2 L4.6 23.4" stroke="#f4f4f4" stroke-width="4.2" stroke-linecap="round"/><circle cx="4.8" cy="23.2" r="0.9" fill="#b9c4cc"/></svg>
<div style="left:387px;top:101px;width:48px;height:94px;background:#646464;border-radius:1px;"></div>
<div style="left:390px;top:104.4px;width:42px;height:87.4px;background:#3e3e3e;border-radius:4px;"></div>
<svg style="left:404px;top:135px;" width="26" height="26" viewBox="0 0 26 26"><path d="M2 2 L12 13 L2 24 M12 2 L22 13 L12 24" fill="none" stroke="#fff" stroke-width="2.2"/></svg>
<div style="left:393px;top:202px;width:35.2px;height:32px;background:#2a2a2a;background:repeating-linear-gradient(90deg,#4e4e4e 0 1.3px,#2b2b2b 1.3px 3.32px);"></div>
<div style="left:387px;top:234px;width:48px;height:1620px;background:#646464;border-radius:1px;"></div>
<div style="left:390px;top:237px;width:42px;height:1616px;background:#262626;background-color:#262626;background-image:linear-gradient(90deg,transparent 10px,#353535 10px,#353535 11px,transparent 11px),repeating-linear-gradient(180deg,#353535 0,#353535 1px,transparent 1px,transparent 24px);background-position:0 0,0 7px;"></div>
<div style="left:390px;top:412px;width:42px;height:1.2px;background:#111111;"></div>
<div style="left:390px;top:604px;width:42px;height:1.2px;background:#111111;"></div>
<div style="left:390px;top:796px;width:42px;height:1.2px;background:#111111;"></div>
<div style="left:390px;top:988px;width:42px;height:1.2px;background:#111111;"></div>
<div style="left:390px;top:1180px;width:42px;height:1.2px;background:#111111;"></div>
<div style="left:390px;top:1372px;width:42px;height:1.2px;background:#111111;"></div>
<div style="left:390px;top:1564px;width:42px;height:1.2px;background:#111111;"></div>
<div style="left:390px;top:1756px;width:42px;height:1.2px;background:#111111;"></div>
<div style="left:424px;top:237px;width:1px;height:1616px;background:#141414;"></div>
<div style="left:425px;top:237px;width:7px;height:1616px;background:#164055;"></div>
<div style="left:390px;top:237px;width:42px;height:62.4px;background:rgba(0,0,0,.58);"></div>
<div class="t" style="left:398px;top:246px;font-size:31px;line-height:36px;color:#3a3a3a;">Z</div>
<svg style="left:409px;top:249px;" width="23" height="35.5" viewBox="0 0 23 35.5"><defs><linearGradient id="ag" x1="0" x2="1"><stop offset="0" stop-color="#cfcfcf"/><stop offset="1" stop-color="#8c8c8c"/></linearGradient></defs><path d="M0.3 17.3 L15.8 0.4 L15.8 6 L23 6 L23 25 L15.8 25 L15.8 35 Z" fill="url(#ag)"/></svg>
<div style="left:432px;top:237px;width:3px;height:1616px;background:#646464;"></div>
<div style="left:449px;top:69px;width:225px;height:33px;background:#626262;border-radius:3px 3px 0 0;"></div>
<div style="left:451px;top:68.8px;width:223px;height:1.8px;background:#b9a83a;background:linear-gradient(90deg,rgba(200,180,50,0),#d2bc30 25%,#d2bc30);border-radius:0 3px 0 0;"></div>
<div class="t" style="left:490.4px;top:72.5px;font-size:18.5px;line-height:24px;color:#ececec;letter-spacing:0.080px;text-shadow:1px 1px 0 rgba(0,0,0,.85);">Details</div>
<svg style="left:649.5px;top:81.5px;" width="9" height="9" viewBox="0 0 9 9"><path d="M1 1 L8 8 M8 1 L1 8" stroke="#444" stroke-width="1.8"/></svg>
<svg style="left:456px;top:71px;" width="28" height="28" viewBox="0 0 28 28"><defs><linearGradient id="dg" x1="0" y1="0" x2="0" y2="1"><stop offset="0" stop-color="#a8a8a8"/><stop offset="1" stop-color="#5e5e5e"/></linearGradient></defs><ellipse cx="12.5" cy="23.5" rx="8.5" ry="2" fill="#2a2a2a" opacity=".5"/><path d="M18.5 19 L25.3 25" stroke="#3563cf" stroke-width="2.8" stroke-linecap="round"/><circle cx="11.9" cy="11.9" r="8.9" fill="url(#dg)" stroke="#4672dc" stroke-width="2"/></svg>
<div class="t" style="left:464.2px;top:72.2px;font-family:'Liberation Serif',serif;font-weight:bold;font-size:18px;line-height:21px;color:#f2f2f2;">i</div>
<div style="left:443px;top:101px;width:1560px;height:1760px;background:#646464;"></div>
<div style="left:452px;top:108px;width:1545px;height:27px;background:#cfcfcf;border-radius:3px 0 0 3px;"></div>
<div class="t" style="left:458.9px;top:110.7px;font-size:17.5px;line-height:23px;color:#8a8a8a;letter-spacing:-0.095px;">Search</div>
<div style="left:446.1px;top:140px;width:1560px;height:9.8px;background:#3e3e3e;border-radius:0 0 0 4px;"></div>
<div style="left:1623.2px;top:140px;width:1.6px;height:7px;background:#181818;"></div>
<div style="left:446.1px;top:153.5px;width:1560px;height:92.9px;background:#3e3e3e;border-radius:4px 0 0 4px;"></div>
<div style="left:446.1px;top:153.5px;width:1560px;height:31.099999999999994px;background:#2f2f2f;border-radius:4px 0 0 0;"></div>
<svg style="left:450.6px;top:161.6px;" width="10.5" height="10.5" viewBox="0 0 10 10"><path d="M10 0 L10 10 L0 10 Z" fill="#c8c8c8"/></svg>
<div class="t" style="left:467.3px;top:156.1px;font-size:19px;line-height:25px;color:#f2f2f2;letter-spacing:-0.011px;font-weight:bold;text-shadow:1px 1px 0 rgba(0,0,0,.85);">Sockets</div>
<div style="left:1623.2px;top:184.6px;width:1.6px;height:59.0px;background:#181818;"></div>
<div class="t" style="left:470.0px;top:196.4px;font-size:17px;line-height:22px;color:#dcdcdc;letter-spacing:0.045px;">Parent Socket</div>
<div style="left:1630px;top:190.3px;width:114px;height:32.2px;background:#7f7f7f;"></div>
<div class="t" style="left:1636.9px;top:197.2px;font-size:16.5px;line-height:21px;color:#d6d6d6;letter-spacing:-0.645px;">None</div>
<svg style="left:1753px;top:196px;" width="20" height="20" viewBox="0 0 20 20"><circle cx="11.7" cy="8.3" r="6.6" fill="none" stroke="#dcdcdc" stroke-width="2.9"/><path d="M6.6 13.4 L2.6 17.4" stroke="#dcdcdc" stroke-width="4.4" stroke-linecap="round"/></svg>
<svg style="left:1791px;top:197.5px;" width="16.5" height="16.5" viewBox="0 0 20 20"><path d="M3.5 3.5 L16.5 16.5 M16.5 3.5 L3.5 16.5" stroke="#e6e6e6" stroke-width="4.6"/></svg>
<div style="left:446.1px;top:250.2px;width:1560px;height:93.19999999999999px;background:#3e3e3e;border-radius:4px 0 0 4px;"></div>
<div style="left:446.1px;top:250.2px;width:1560px;height:31.5px;background:#2f2f2f;border-radius:4px 0 0 0;"></div>
<div style="left:446.1px;top:323.8px;width:1560px;height:19.599999999999966px;background:#484848;border-radius:0 0 0 4px;"></div>
<svg style="left:450.6px;top:258.6px;" width="10.5" height="10.5" viewBox="0 0 10 10"><path d="M10 0 L10 10 L0 10 Z" fill="#c8c8c8"/></svg>
<div class="t" style="left:467.3px;top:253.1px;font-size:19px;line-height:25px;color:#f2f2f2;letter-spacing:-0.650px;font-weight:bold;text-shadow:1px 1px 0 rgba(0,0,0,.85);">Shape</div>
<div style="left:1623.2px;top:281.7px;width:1.6px;height:37.80000000000001px;background:#181818;"></div>
<svg style="left:452.5px;top:294.3px;" width="8.5" height="13" viewBox="0 0 9 14"><path d="M1 1.2 L7.6 7 L1 12.8 Z" fill="none" stroke="#c0c0c0" stroke-width="1.4" stroke-linejoin="round"/></svg>
<div class="t" style="left:470.0px;top:290.9px;font-size:17px;line-height:22px;color:#dcdcdc;letter-spacing:-0.133px;">Box Extent</div>
<div style="left:1629.2px;top:289.2px;width:176.8px;height:24.2px;background:#dcdcdc;border-radius:4px;"></div>
<div class="t" style="left:1634.2px;top:290.7px;font-size:17px;line-height:22px;color:#0a0a0a;letter-spacing:0.000px;">X</div>
<div class="t" style="left:1654.4px;top:290.7px;font-size:17px;line-height:22px;color:#0a0a0a;letter-spacing:-0.522px;">32.0</div>
<svg style="left:1784.7px;top:295.2px;" width="12.2" height="11.7" viewBox="0 0 12.2 11.7"><path d="M4.7 0 L12.2 0 L12.2 7.2 Z M0 4.9 L0 11.7 L7.7 11.7 Z" fill="#0a0a0a"/></svg>
<div style="left:1810px;top:289.2px;width:177px;height:24.2px;background:#dcdcdc;border-radius:4px;"></div>
<div class="t" style="left:1815.2px;top:290.7px;font-size:17px;line-height:22px;color:#0a0a0a;letter-spacing:0.000px;">Y</div>
<div class="t" style="left:1835.4px;top:290.7px;font-size:17px;line-height:22px;color:#0a0a0a;letter-spacing:-0.522px;">32.0</div>
<svg style="left:1965.7px;top:295.2px;" width="12.2" height="11.7" viewBox="0 0 12.2 11.7"><path d="M4.7 0 L12.2 0 L12.2 7.2 Z M0 4.9 L0 11.7 L7.7 11.7 Z" fill="#0a0a0a"/></svg>
<div style="left:446.1px;top:347px;width:1560px;height:128.5px;background:#3e3e3e;border-radius:4px 0 0 4px;"></div>
<div style="left:446.1px;top:347px;width:1560px;height:31.69999999999999px;background:#2f2f2f;border-radius:4px 0 0 0;"></div>
<svg style="left:450.6px;top:355.6px;" width="10.5" height="10.5" viewBox="0 0 10 10"><path d="M10 0 L10 10 L0 10 Z" fill="#c8c8c8"/></svg>
<div class="t" style="left:467.3px;top:350.1px;font-size:19px;line-height:25px;color:#f2f2f2;letter-spacing:-0.066px;font-weight:bold;text-shadow:1px 1px 0 rgba(0,0,0,.85);">Navigation</div>
<div style="left:1623.2px;top:378.7px;width:1.6px;height:94.0px;background:#181818;"></div>
<div class="t" style="left:470.0px;top:386.7px;font-size:17px;line-height:22px;color:#dcdcdc;letter-spacing:0.103px;">Dynamic Obstacle</div>
<div style="left:1630.3px;top:386.8px;width:21.2px;height:21px;background:#ababab;border-radius:3.5px;border:1px solid #b6b6b6;"></div>
<div class="t" style="left:470.0px;top:424.9px;font-size:17px;line-height:22px;color:#dcdcdc;letter-spacing:-0.126px;">Area Class</div>
<div style="left:1629.2px;top:421.1px;width:170.9px;height:29.1px;background:#c8c8c8;border-radius:3px;border:1px solid #7a7a7a;background:linear-gradient(#e6e6e6,#d4d4d4 45%,#b2b2b2);box-shadow:0 1px 1.5px rgba(0,0,0,.55);"></div>
<div class="t" style="left:1635.4px;top:425.3px;font-size:17px;line-height:22px;color:#0a0a0a;letter-spacing:-0.248px;">NavArea_Obstacle</div>
<svg style="left:1778.5px;top:432.45px;" width="13" height="8.5" viewBox="0 0 12.8 8.4"><path d="M0 0.5 L12 0.5 L6 7.5 Z" fill="#0a0a0a"/></svg>
<svg style="left:1814.5px;top:426px;" width="18.5" height="18.5" viewBox="0 0 19 19"><path d="M0.5 9.5 L9.5 1 L9.5 6 L18.5 6 L18.5 13 L9.5 13 L9.5 18 Z" fill="#e0e0e0"/></svg>
<svg style="left:1850px;top:425.5px;" width="20" height="20" viewBox="0 0 20 20"><circle cx="11.7" cy="8.3" r="6.6" fill="none" stroke="#dcdcdc" stroke-width="2.9"/><path d="M6.6 13.4 L2.6 17.4" stroke="#dcdcdc" stroke-width="4.4" stroke-linecap="round"/></svg>
<svg style="left:1887px;top:427px;" width="17" height="17" viewBox="0 0 20 20"><path d="M10 2 V18 M2 10 H18" stroke="#e6e6e6" stroke-width="4.4"/></svg>
<svg style="left:1923.5px;top:427px;" width="16.5" height="16.5" viewBox="0 0 20 20"><path d="M3.5 3.5 L16.5 16.5 M16.5 3.5 L3.5 16.5" stroke="#e6e6e6" stroke-width="4.6"/></svg>
<div style="left:446.1px;top:479.6px;width:1560px;height:126.10000000000002px;background:#3e3e3e;border-radius:4px 0 0 4px;"></div>
<div style="left:446.1px;top:479.6px;width:1560px;height:31.19999999999999px;background:#2f2f2f;border-radius:4px 0 0 0;"></div>
<div style="left:446.1px;top:585.5px;width:1560px;height:20.200000000000045px;background:#484848;border-radius:0 0 0 4px;"></div>
<svg style="left:450.6px;top:488.20000000000005px;" width="10.5" height="10.5" viewBox="0 0 10 10"><path d="M10 0 L10 10 L0 10 Z" fill="#c8c8c8"/></svg>
<div class="t" style="left:467.3px;top:482.7px;font-size:19px;line-height:25px;color:#f2f2f2;letter-spacing:-0.369px;font-weight:bold;text-shadow:1px 1px 0 rgba(0,0,0,.85);">Rendering</div>
<div style="left:1623.2px;top:510.8px;width:1.6px;height:70.69999999999999px;background:#181818;"></div>
<div class="t" style="left:470.0px;top:519.1px;font-size:17px;line-height:22px;color:#dcdcdc;letter-spacing:0.532px;">Visible</div>
<div style="left:1630.3px;top:518.3px;width:21.2px;height:21px;background:#e0e0e0;border-radius:3.5px;border:1px solid #ececec;"></div>
<svg style="left:1630.3px;top:518.3px;" width="21" height="21" viewBox="0 0 21 21"><path d="M4.5 11 L9 15.5 L17 5.5" fill="none" stroke="#626262" stroke-width="3.1"/></svg>
<div class="t" style="left:470.0px;top:554.1px;font-size:17px;line-height:22px;color:#dcdcdc;letter-spacing:-0.140px;">Hidden in Game</div>
<div style="left:1630.3px;top:554.4px;width:21.2px;height:21px;background:#e0e0e0;border-radius:3.5px;border:1px solid #ececec;"></div>
<svg style="left:1630.3px;top:554.4px;" width="21" height="21" viewBox="0 0 21 21"><path d="M4.5 11 L9 15.5 L17 5.5" fill="none" stroke="#626262" stroke-width="3.1"/></svg>
<div style="left:446.1px;top:609.3px;width:1560px;height:373.20000000000005px;background:#3e3e3e;border-radius:4px 0 0 4px;"></div>
<div style="left:446.1px;top:609.3px;width:1560px;height:31.700000000000045px;background:#2f2f2f;border-radius:4px 0 0 0;"></div>
<div style="left:446.1px;top:962px;width:1560px;height:20.5px;background:#484848;border-radius:0 0 0 4px;"></div>
<svg style="left:450.6px;top:617.9px;" width="10.5" height="10.5" viewBox="0 0 10 10"><path d="M10 0 L10 10 L0 10 Z" fill="#c8c8c8"/></svg>
<div class="t" style="left:467.3px;top:612.4px;font-size:19px;line-height:25px;color:#f2f2f2;letter-spacing:-0.220px;font-weight:bold;text-shadow:1px 1px 0 rgba(0,0,0,.85);">Physics</div>
<div style="left:1623.2px;top:641px;width:1.6px;height:317px;background:#181818;"></div>
<div class="t" style="left:470.0px;top:649.0px;font-size:17px;line-height:22px;color:#dcdcdc;letter-spacing:0.370px;">Simulate Physics</div>
<div style="left:1630.3px;top:648.5px;width:21.2px;height:21px;background:#ababab;border-radius:3.5px;border:1px solid #b6b6b6;"></div>
<div style="left:471.3px;top:684.5px;width:21.2px;height:21px;background:#ababab;border-radius:3.5px;border:1px solid #b6b6b6;"></div>
<div class="t" style="left:497.3px;top:684.3px;font-size:17px;line-height:22px;color:#747474;letter-spacing:-0.009px;">MassInKg</div>
<div style="left:1629.2px;top:681px;width:149px;height:27.8px;background:#828282;border-radius:5px;"></div>
<div class="t" style="left:1636.7px;top:683.9px;font-size:17px;line-height:22px;color:#383838;letter-spacing:-0.478px;">65.148582</div>
<div class="t" style="left:470.0px;top:719.9px;font-size:17px;line-height:22px;color:#dcdcdc;letter-spacing:-0.078px;">Linear Damping</div>
<div style="left:1629.2px;top:718.2px;width:158px;height:24.6px;background:#dcdcdc;border-radius:4px;"></div>
<div class="t" style="left:1634.8px;top:719.9px;font-size:17px;line-height:22px;color:#0a0a0a;letter-spacing:-1.022px;">0.01</div>
<svg style="left:1765.9px;top:724.4px;" width="12.2" height="11.7" viewBox="0 0 12.2 11.7"><path d="M4.7 0 L12.2 0 L12.2 7.2 Z M0 4.9 L0 11.7 L7.7 11.7 Z" fill="#0a0a0a"/></svg>
<div class="t" style="left:470.0px;top:755.1px;font-size:17px;line-height:22px;color:#dcdcdc;letter-spacing:-0.095px;">Angular Damping</div>
<div style="left:1629.2px;top:753px;width:158px;height:24.6px;background:#dcdcdc;border-radius:4px;"></div>
<div class="t" style="left:1634.8px;top:754.7px;font-size:17px;line-height:22px;color:#0a0a0a;letter-spacing:-0.665px;">0.0</div>
<svg style="left:1765.9px;top:759.1999999999999px;" width="12.2" height="11.7" viewBox="0 0 12.2 11.7"><path d="M4.7 0 L12.2 0 L12.2 7.2 Z M0 4.9 L0 11.7 L7.7 11.7 Z" fill="#0a0a0a"/></svg>
<div class="t" style="left:470.0px;top:790.7px;font-size:17px;line-height:22px;color:#dcdcdc;letter-spacing:-0.194px;">Enable Gravity</div>
<div style="left:1630.3px;top:790.5px;width:21.2px;height:21px;background:#e0e0e0;border-radius:3.5px;border:1px solid #ececec;"></div>
<svg style="left:1630.3px;top:790.5px;" width="21" height="21" viewBox="0 0 21 21"><path d="M4.5 11 L9 15.5 L17 5.5" fill="none" stroke="#626262" stroke-width="3.1"/></svg>
<svg style="left:452.5px;top:828.5px;" width="8.5" height="13" viewBox="0 0 9 14"><path d="M1 1.2 L7.6 7 L1 12.8 Z" fill="none" stroke="#c0c0c0" stroke-width="1.4" stroke-linejoin="round"/></svg>
<div class="t" style="left:470.0px;top:825.1px;font-size:17px;line-height:22px;color:#dcdcdc;letter-spacing:0.198px;">Constraints</div>
<div class="t" style="left:470.0px;top:860.1px;font-size:17px;line-height:22px;color:#dcdcdc;letter-spacing:0.030px;">Ignore Radial Impulse</div>
<div style="left:1630.3px;top:860px;width:21.2px;height:21px;background:#ababab;border-radius:3.5px;border:1px solid #b6b6b6;"></div>
<div class="t" style="left:470.0px;top:895.9px;font-size:17px;line-height:22px;color:#dcdcdc;letter-spacing:-0.130px;">Ignore Radial Force</div>
<div style="left:1630.3px;top:895.5px;width:21.2px;height:21px;background:#ababab;border-radius:3.5px;border:1px solid #b6b6b6;"></div>
<div class="t" style="left:470.0px;top:930.9px;font-size:17px;line-height:22px;color:#dcdcdc;letter-spacing:-0.019px;">Apply Impulse on Damage</div>
<div style="left:1630.3px;top:931px;width:21.2px;height:21px;background:#e0e0e0;border-radius:3.5px;border:1px solid #ececec;"></div>
<svg style="left:1630.3px;top:931px;" width="21" height="21" viewBox="0 0 21 21"><path d="M4.5 11 L9 15.5 L17 5.5" fill="none" stroke="#626262" stroke-width="3.1"/></svg>
<div style="left:446.1px;top:985.6px;width:1560px;height:874.4px;background:#3e3e3e;border-radius:4px 0 0 4px;"></div>
<div style="left:446.1px;top:985.6px;width:1560px;height:32.10000000000002px;background:#2f2f2f;border-radius:4px 0 0 0;"></div>
<div style="left:446.1px;top:1829.2px;width:1560px;height:30.799999999999955px;background:#484848;border-radius:0 0 0 4px;"></div>
<svg style="left:450.6px;top:995.1px;" width="10.5" height="10.5" viewBox="0 0 10 10"><path d="M10 0 L10 10 L0 10 Z" fill="#c8c8c8"/></svg>
<div class="t" style="left:467.3px;top:989.6px;font-size:19px;line-height:25px;color:#f2f2f2;letter-spacing:-0.647px;font-weight:bold;text-shadow:1px 1px 0 rgba(0,0,0,.85);">Collision</div>
<div style="left:1623.2px;top:1017.7px;width:1.6px;height:807.0999999999999px;background:#181818;"></div>
<div class="t" style="left:470.0px;top:1026.1px;font-size:17px;line-height:22px;color:#dcdcdc;letter-spacing:0.112px;">Simulation Generates Hit Events</div>
<div style="left:1630.3px;top:1025.5px;width:21.2px;height:21px;background:#ababab;border-radius:3.5px;border:1px solid #b6b6b6;"></div>
<div class="t" style="left:470.0px;top:1103.0px;font-size:17px;line-height:22px;color:#dcdcdc;letter-spacing:0.196px;">Phys Material Override</div>
<div style="left:1636.8px;top:1064.8px;width:96.3px;height:96.5px;background:#4a4836;background:linear-gradient(#444232,#504e3b);box-shadow:0 0 5px 1px rgba(0,0,0,.65);"></div>
<div style="left:1636.8px;top:1157px;width:96.3px;height:4.3px;background:#d6ca78;"></div>
<div class="t" style="left:1666.9px;top:1105.0px;font-size:13.5px;line-height:18px;color:#e0e0e0;letter-spacing:-0.255px;text-shadow:1px 1px 0 rgba(0,0,0,.85);">None</div>
<div style="left:1743.5px;top:1084.2px;width:260px;height:26.6px;background:#5c5c5c;border-radius:4px 0 0 4px;"></div>
<div class="t" style="left:1746.2px;top:1086.8px;font-size:16.5px;line-height:21px;color:#fff;letter-spacing:-0.312px;text-shadow:1px 1px 0 rgba(0,0,0,.85);">None</div>
<svg style="left:1979.5px;top:1094px;" width="12" height="8" viewBox="0 0 12.8 8.4"><path d="M0 0.5 L12 0.5 L6 7.5 Z" fill="#e0e0e0"/></svg>
<svg style="left:1752px;top:1120px;" width="18.5" height="18.5" viewBox="0 0 19 19"><path d="M0.5 9.5 L9.5 1 L9.5 6 L18.5 6 L18.5 13 L9.5 13 L9.5 18 Z" fill="#e0e0e0"/></svg>
<svg style="left:1787px;top:1119.5px;" width="20" height="20" viewBox="0 0 20 20"><circle cx="11.7" cy="8.3" r="6.6" fill="none" stroke="#dcdcdc" stroke-width="2.9"/><path d="M6.6 13.4 L2.6 17.4" stroke="#dcdcdc" stroke-width="4.4" stroke-linecap="round"/></svg>
<div class="t" style="left:470.0px;top:1179.8px;font-size:17px;line-height:22px;color:#dcdcdc;letter-spacing:-0.175px;">Generate Overlap Events</div>
<div style="left:1630.3px;top:1179.7px;width:21.2px;height:21px;background:#e0e0e0;border-radius:3.5px;border:1px solid #ececec;"></div>
<svg style="left:1630.3px;top:1179.7px;" width="21" height="21" viewBox="0 0 21 21"><path d="M4.5 11 L9 15.5 L17 5.5" fill="none" stroke="#626262" stroke-width="3.1"/></svg>
<div class="t" style="left:470.0px;top:1216.9px;font-size:17px;line-height:22px;color:#dcdcdc;letter-spacing:-0.221px;">Can Character Step Up On</div>
<div style="left:1629.5px;top:1212.6px;width:157.1px;height:29.3px;background:#c8c8c8;border-radius:3px;border:1px solid #7a7a7a;background:linear-gradient(#e6e6e6,#d4d4d4 45%,#b2b2b2);box-shadow:0 1px 1.5px rgba(0,0,0,.55);"></div>
<div class="t" style="left:1638.0px;top:1217.0px;font-size:17px;line-height:22px;color:#0a0a0a;letter-spacing:-0.105px;">Yes</div>
<svg style="left:1762.5px;top:1224.05px;" width="13" height="8.5" viewBox="0 0 12.8 8.4"><path d="M0 0.5 L12 0.5 L6 7.5 Z" fill="#0a0a0a"/></svg>
<svg style="left:451.3px;top:1258.4px;" width="11" height="11" viewBox="0 0 10 10"><path d="M10 0 L10 10 L0 10 Z" fill="#c8c8c8"/></svg>
<div class="t" style="left:470.0px;top:1254.6px;font-size:17px;line-height:22px;color:#dcdcdc;letter-spacing:0.272px;">Collision Presets</div>
<div style="left:1629.5px;top:1250.6px;width:163.1px;height:29.5px;background:#c8c8c8;border-radius:3px;border:1px solid #7a7a7a;background:linear-gradient(#e6e6e6,#d4d4d4 45%,#b2b2b2);box-shadow:0 1px 1.5px rgba(0,0,0,.55);"></div>
<div class="t" style="left:1638.0px;top:1255.0px;font-size:17px;line-height:22px;color:#0a0a0a;letter-spacing:-0.095px;">Custom...</div>
<svg style="left:1768.5px;top:1262.1499999999999px;" width="13" height="8.5" viewBox="0 0 12.8 8.4"><path d="M0 0.5 L12 0.5 L6 7.5 Z" fill="#0a0a0a"/></svg>
<svg style="left:1795.8px;top:1259px;" width="12" height="12" viewBox="0 0 12 12"><path d="M2 3 L8 3 Q10.3 3 10.3 5.2 L10.3 7.8 Q10.3 10 8 10 L4 10" fill="none" stroke="#d8d820" stroke-width="1.8"/><path d="M0 3 L3.6 0 L3.6 6 Z" fill="#d8d820"/></svg>
<div class="t" style="left:485.2px;top:1293.7px;font-size:17px;line-height:22px;color:#dcdcdc;letter-spacing:-0.020px;">Collision Enabled</div>
<div style="left:1629.5px;top:1290.0px;width:296.1px;height:29.2px;background:#c8c8c8;border-radius:3px;border:1px solid #7a7a7a;background:linear-gradient(#e6e6e6,#d4d4d4 45%,#b2b2b2);box-shadow:0 1px 1.5px rgba(0,0,0,.55);"></div>
<div class="t" style="left:1638.0px;top:1294.3px;font-size:17px;line-height:22px;color:#0a0a0a;letter-spacing:0.109px;">Query Only (No Physics Collision)</div>
<svg style="left:1901.5px;top:1301.4px;" width="13" height="8.5" viewBox="0 0 12.8 8.4"><path d="M0 0.5 L12 0.5 L6 7.5 Z" fill="#0a0a0a"/></svg>
<div class="t" style="left:485.2px;top:1331.5px;font-size:17px;line-height:22px;color:#dcdcdc;letter-spacing:0.256px;">Object Type</div>
<div style="left:1629.5px;top:1328.0px;width:187.1px;height:29.2px;background:#c8c8c8;border-radius:3px;border:1px solid #7a7a7a;background:linear-gradient(#e6e6e6,#d4d4d4 45%,#b2b2b2);box-shadow:0 1px 1.5px rgba(0,0,0,.55);"></div>
<div class="t" style="left:1635.2px;top:1332.3px;font-size:17px;line-height:22px;color:#0a0a0a;letter-spacing:-0.113px;">WorldDynamic</div>
<svg style="left:1795.5px;top:1339.4px;" width="13" height="8.5" viewBox="0 0 12.8 8.4"><path d="M0 0.5 L12 0.5 L6 7.5 Z" fill="#0a0a0a"/></svg>
<div class="t" style="left:1628.9px;top:1365.0px;font-size:16.2px;line-height:21px;color:#dcdcdc;letter-spacing:-0.698px;font-weight:bold;">Ignore</div>
<div class="t" style="left:1703.9px;top:1365.0px;font-size:16.2px;line-height:21px;color:#dcdcdc;letter-spacing:-0.224px;font-weight:bold;">Overlap</div>
<div class="t" style="left:1778.7px;top:1365.0px;font-size:16.2px;line-height:21px;color:#dcdcdc;letter-spacing:-0.486px;font-weight:bold;">Block</div>
<div class="t" style="left:488.2px;top:1397.3px;font-size:16.2px;line-height:21px;color:#dcdcdc;letter-spacing:-0.307px;font-weight:bold;">Collision Responses</div>
<div style="left:650.8px;top:1396px;width:20.6px;height:20.6px;background:#2a2e39;border-radius:50%;border:2.8px solid #525d76;"></div>
<div class="t" style="left:656.3px;top:1396.8px;font-size:16px;line-height:19px;font-weight:bold;color:#525d76;">?</div>
<div style="left:1630.3px;top:1396.5px;width:21.2px;height:21px;background:#e0e0e0;border-radius:3.5px;border:1px solid #ececec;"></div>
<svg style="left:1633.3px;top:1399.5px;" width="15" height="15" viewBox="0 0 15 15"><path d="M-1 6 L6 -1 M-1 11 L11 -1 M-1 16 L16 -1 M4 16 L16 4 M9 16 L16 9" stroke="#3a3a3a" stroke-width="2.3"/></svg>
<div style="left:1705.2px;top:1396.5px;width:21.2px;height:21px;background:#e0e0e0;border-radius:3.5px;border:1px solid #ececec;"></div>
<svg style="left:1708.2px;top:1399.5px;" width="15" height="15" viewBox="0 0 15 15"><path d="M-1 6 L6 -1 M-1 11 L11 -1 M-1 16 L16 -1 M4 16 L16 4 M9 16 L16 9" stroke="#3a3a3a" stroke-width="2.3"/></svg>
<div style="left:1780.3px;top:1396.5px;width:21.2px;height:21px;background:#ababab;border-radius:3.5px;border:1px solid #b6b6b6;"></div>
<div class="t" style="left:500.3px;top:1428.9px;font-size:16.2px;line-height:21px;color:#dcdcdc;letter-spacing:-0.303px;font-weight:bold;">Trace Responses</div>
<div class="t" style="left:500.3px;top:1581.2px;font-size:16.2px;line-height:21px;color:#dcdcdc;letter-spacing:-0.276px;font-weight:bold;">Object Responses</div>
<div class="t" style="left:507.0px;top:1458.0px;font-size:17px;line-height:22px;color:#dcdcdc;letter-spacing:0.765px;">Visibility</div>
<div style="left:1630.3px;top:1457.6px;width:21.2px;height:21px;background:#ababab;border-radius:3.5px;border:1px solid #b6b6b6;"></div>
<div style="left:1705.2px;top:1457.6px;width:21.2px;height:21px;background:#e0e0e0;border-radius:3.5px;border:1px solid #ececec;"></div>
<svg style="left:1705.2px;top:1457.6px;" width="21" height="21" viewBox="0 0 21 21"><path d="M4.5 11 L9 15.5 L17 5.5" fill="none" stroke="#626262" stroke-width="3.1"/></svg>
<div style="left:1780.3px;top:1457.6px;width:21.2px;height:21px;background:#ababab;border-radius:3.5px;border:1px solid #b6b6b6;"></div>
<svg style="left:1806px;top:1461.1999999999998px;" width="12" height="12" viewBox="0 0 12 12"><path d="M2 3 L8 3 Q10.3 3 10.3 5.2 L10.3 7.8 Q10.3 10 8 10 L4 10" fill="none" stroke="#d8d820" stroke-width="1.8"/><path d="M0 3 L3.6 0 L3.6 6 Z" fill="#d8d820"/></svg>
<div class="t" style="left:507.0px;top:1489.4px;font-size:17px;line-height:22px;color:#dcdcdc;letter-spacing:-0.304px;">Camera</div>
<div style="left:1630.3px;top:1489.3px;width:21.2px;height:21px;background:#e0e0e0;border-radius:3.5px;border:1px solid #ececec;"></div>
<svg style="left:1630.3px;top:1489.3px;" width="21" height="21" viewBox="0 0 21 21"><path d="M4.5 11 L9 15.5 L17 5.5" fill="none" stroke="#626262" stroke-width="3.1"/></svg>
<div style="left:1705.2px;top:1489.3px;width:21.2px;height:21px;background:#ababab;border-radius:3.5px;border:1px solid #b6b6b6;"></div>
<div style="left:1780.3px;top:1489.3px;width:21.2px;height:21px;background:#ababab;border-radius:3.5px;border:1px solid #b6b6b6;"></div>
<svg style="left:1806px;top:1492.8999999999999px;" width="12" height="12" viewBox="0 0 12 12"><path d="M2 3 L8 3 Q10.3 3 10.3 5.2 L10.3 7.8 Q10.3 10 8 10 L4 10" fill="none" stroke="#d8d820" stroke-width="1.8"/><path d="M0 3 L3.6 0 L3.6 6 Z" fill="#d8d820"/></svg>
<div class="t" style="left:507.0px;top:1521.0px;font-size:17px;line-height:22px;color:#dcdcdc;letter-spacing:-0.543px;">Grid</div>
<div style="left:1630.3px;top:1520.4px;width:21.2px;height:21px;background:#e0e0e0;border-radius:3.5px;border:1px solid #ececec;"></div>
<svg style="left:1630.3px;top:1520.4px;" width="21" height="21" viewBox="0 0 21 21"><path d="M4.5 11 L9 15.5 L17 5.5" fill="none" stroke="#626262" stroke-width="3.1"/></svg>
<div style="left:1705.2px;top:1520.4px;width:21.2px;height:21px;background:#ababab;border-radius:3.5px;border:1px solid #b6b6b6;"></div>
<div style="left:1780.3px;top:1520.4px;width:21.2px;height:21px;background:#ababab;border-radius:3.5px;border:1px solid #b6b6b6;"></div>
<svg style="left:1806px;top:1524.0px;" width="12" height="12" viewBox="0 0 12 12"><path d="M2 3 L8 3 Q10.3 3 10.3 5.2 L10.3 7.8 Q10.3 10 8 10 L4 10" fill="none" stroke="#d8d820" stroke-width="1.8"/><path d="M0 3 L3.6 0 L3.6 6 Z" fill="#d8d820"/></svg>
<div class="t" style="left:507.0px;top:1552.1px;font-size:17px;line-height:22px;color:#dcdcdc;letter-spacing:-0.697px;">Weapon</div>
<div style="left:1630.3px;top:1552.3px;width:21.2px;height:21px;background:#e0e0e0;border-radius:3.5px;border:1px solid #ececec;"></div>
<svg style="left:1630.3px;top:1552.3px;" width="21" height="21" viewBox="0 0 21 21"><path d="M4.5 11 L9 15.5 L17 5.5" fill="none" stroke="#626262" stroke-width="3.1"/></svg>
<div style="left:1705.2px;top:1552.3px;width:21.2px;height:21px;background:#ababab;border-radius:3.5px;border:1px solid #b6b6b6;"></div>
<div style="left:1780.3px;top:1552.3px;width:21.2px;height:21px;background:#ababab;border-radius:3.5px;border:1px solid #b6b6b6;"></div>
<svg style="left:1806px;top:1555.8999999999999px;" width="12" height="12" viewBox="0 0 12 12"><path d="M2 3 L8 3 Q10.3 3 10.3 5.2 L10.3 7.8 Q10.3 10 8 10 L4 10" fill="none" stroke="#d8d820" stroke-width="1.8"/><path d="M0 3 L3.6 0 L3.6 6 Z" fill="#d8d820"/></svg>
<div class="t" style="left:507.0px;top:1610.0px;font-size:17px;line-height:22px;color:#dcdcdc;letter-spacing:0.169px;">WorldStatic</div>
<div style="left:1630.3px;top:1610.1px;width:21.2px;height:21px;background:#ababab;border-radius:3.5px;border:1px solid #b6b6b6;"></div>
<div style="left:1705.2px;top:1610.1px;width:21.2px;height:21px;background:#e0e0e0;border-radius:3.5px;border:1px solid #ececec;"></div>
<svg style="left:1705.2px;top:1610.1px;" width="21" height="21" viewBox="0 0 21 21"><path d="M4.5 11 L9 15.5 L17 5.5" fill="none" stroke="#626262" stroke-width="3.1"/></svg>
<div style="left:1780.3px;top:1610.1px;width:21.2px;height:21px;background:#ababab;border-radius:3.5px;border:1px solid #b6b6b6;"></div>
<div class="t" style="left:507.0px;top:1641.9px;font-size:17px;line-height:22px;color:#dcdcdc;letter-spacing:-0.077px;">WorldDynamic</div>
<div style="left:1630.3px;top:1641.3px;width:21.2px;height:21px;background:#ababab;border-radius:3.5px;border:1px solid #b6b6b6;"></div>
<div style="left:1705.2px;top:1641.3px;width:21.2px;height:21px;background:#e0e0e0;border-radius:3.5px;border:1px solid #ececec;"></div>
<svg style="left:1705.2px;top:1641.3px;" width="21" height="21" viewBox="0 0 21 21"><path d="M4.5 11 L9 15.5 L17 5.5" fill="none" stroke="#626262" stroke-width="3.1"/></svg>
<div style="left:1780.3px;top:1641.3px;width:21.2px;height:21px;background:#ababab;border-radius:3.5px;border:1px solid #b6b6b6;"></div>
<div class="t" style="left:507.0px;top:1672.7px;font-size:17px;line-height:22px;color:#dcdcdc;letter-spacing:-0.500px;">Pawn</div>
<div style="left:1630.3px;top:1673.5px;width:21.2px;height:21px;background:#ababab;border-radius:3.5px;border:1px solid #b6b6b6;"></div>
<div style="left:1705.2px;top:1673.5px;width:21.2px;height:21px;background:#e0e0e0;border-radius:3.5px;border:1px solid #ececec;"></div>
<svg style="left:1705.2px;top:1673.5px;" width="21" height="21" viewBox="0 0 21 21"><path d="M4.5 11 L9 15.5 L17 5.5" fill="none" stroke="#626262" stroke-width="3.1"/></svg>
<div style="left:1780.3px;top:1673.5px;width:21.2px;height:21px;background:#ababab;border-radius:3.5px;border:1px solid #b6b6b6;"></div>
<div class="t" style="left:507.0px;top:1704.9px;font-size:17px;line-height:22px;color:#dcdcdc;letter-spacing:0.088px;">PhysicsBody</div>
<div style="left:1630.3px;top:1704.5px;width:21.2px;height:21px;background:#ababab;border-radius:3.5px;border:1px solid #b6b6b6;"></div>
<div style="left:1705.2px;top:1704.5px;width:21.2px;height:21px;background:#e0e0e0;border-radius:3.5px;border:1px solid #ececec;"></div>
<svg style="left:1705.2px;top:1704.5px;" width="21" height="21" viewBox="0 0 21 21"><path d="M4.5 11 L9 15.5 L17 5.5" fill="none" stroke="#626262" stroke-width="3.1"/></svg>
<div style="left:1780.3px;top:1704.5px;width:21.2px;height:21px;background:#ababab;border-radius:3.5px;border:1px solid #b6b6b6;"></div>
<div class="t" style="left:507.0px;top:1736.0px;font-size:17px;line-height:22px;color:#dcdcdc;letter-spacing:0.296px;">Vehicle</div>
<div style="left:1630.3px;top:1736.4px;width:21.2px;height:21px;background:#ababab;border-radius:3.5px;border:1px solid #b6b6b6;"></div>
<div style="left:1705.2px;top:1736.4px;width:21.2px;height:21px;background:#e0e0e0;border-radius:3.5px;border:1px solid #ececec;"></div>
<svg style="left:1705.2px;top:1736.4px;" width="21" height="21" viewBox="0 0 21 21"><path d="M4.5 11 L9 15.5 L17 5.5" fill="none" stroke="#626262" stroke-width="3.1"/></svg>
<div style="left:1780.3px;top:1736.4px;width:21.2px;height:21px;background:#ababab;border-radius:3.5px;border:1px solid #b6b6b6;"></div>
<div class="t" style="left:507.0px;top:1767.7px;font-size:17px;line-height:22px;color:#dcdcdc;letter-spacing:0.222px;">Destructible</div>
<div style="left:1630.3px;top:1767.5px;width:21.2px;height:21px;background:#ababab;border-radius:3.5px;border:1px solid #b6b6b6;"></div>
<div style="left:1705.2px;top:1767.5px;width:21.2px;height:21px;background:#e0e0e0;border-radius:3.5px;border:1px solid #ececec;"></div>
<svg style="left:1705.2px;top:1767.5px;" width="21" height="21" viewBox="0 0 21 21"><path d="M4.5 11 L9 15.5 L17 5.5" fill="none" stroke="#626262" stroke-width="3.1"/></svg>
<div style="left:1780.3px;top:1767.5px;width:21.2px;height:21px;background:#ababab;border-radius:3.5px;border:1px solid #b6b6b6;"></div>
<div class="t" style="left:507.0px;top:1798.7px;font-size:17px;line-height:22px;color:#dcdcdc;letter-spacing:0.394px;">Projectile</div>
<div style="left:1630.3px;top:1799.3px;width:21.2px;height:21px;background:#e0e0e0;border-radius:3.5px;border:1px solid #ececec;"></div>
<svg style="left:1630.3px;top:1799.3px;" width="21" height="21" viewBox="0 0 21 21"><path d="M4.5 11 L9 15.5 L17 5.5" fill="none" stroke="#626262" stroke-width="3.1"/></svg>
<div style="left:1705.2px;top:1799.3px;width:21.2px;height:21px;background:#ababab;border-radius:3.5px;border:1px solid #b6b6b6;"></div>
<div style="left:1780.3px;top:1799.3px;width:21.2px;height:21px;background:#ababab;border-radius:3.5px;border:1px solid #b6b6b6;"></div>
</div></body></html>
